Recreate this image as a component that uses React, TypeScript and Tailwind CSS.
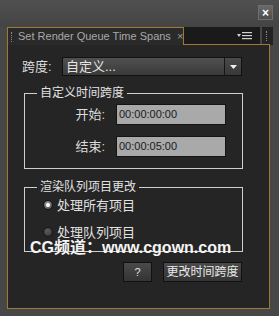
import React from "react";

const gold = "border-[#9c7a35]";

function Radio({ checked }: { checked: boolean }) {
  return (
    <span
      className={
        "flex h-[10px] w-[10px] items-center justify-center rounded-full border border-[#151515] " +
        (checked
          ? "bg-[radial-gradient(circle_at_40%_35%,#9a9a9a,#4a4a4a)]"
          : "bg-[radial-gradient(circle_at_40%_35%,#5c5c5c,#333333)]")
      }
    >
      {checked && <span className="h-[4px] w-[4px] rounded-full bg-white" />}
    </span>
  );
}

export default function App() {
  return (
    <div className="flex h-[316px] w-[279px] flex-col overflow-hidden bg-[#474747] font-['Liberation_Sans','Noto_Sans_CJK_SC',sans-serif]">
      {/* title bar */}
      <div className="flex h-[27px] items-start justify-end bg-gradient-to-b from-[#505050] to-[#444444] pr-[6px] pt-[5px]">
        <div className="flex h-[15px] w-[15px] items-center justify-center border border-[#6e6e6e] bg-gradient-to-b from-[#6a6a6a] to-[#4c4c4c] text-[12px] font-bold leading-none text-white">
          ×
        </div>
      </div>
      {/* tab row */}
      <div className="flex h-[18px]">
        <div className="w-[7px]" />
        <div className={`flex w-[177px] items-center whitespace-nowrap border-l border-r border-t ${gold} bg-[#2a2a2a] pl-[3px]`}>
          <span className="mr-[6px] h-[10px] w-[1px] border-l border-dotted border-[#8a8a8a]" />
          <span className="text-[11px] leading-none text-[#a8a8a8]">Set Render Queue Time Spans</span>
          <span className="ml-[6px] text-[11px] leading-none text-[#9a9a9a]">×</span>
        </div>
        <div className={`flex w-[86px] border-b ${gold}`}>
          <div className="flex flex-1 items-center justify-end bg-[#1a1a1a] pr-[8px]">
            <svg width="15" height="8" viewBox="0 0 15 8">
              <path d="M0 2 L4 2 L2 5 Z" fill="#d0d0d0" />
              <rect x="5" y="0" width="10" height="1.2" fill="#d0d0d0" />
              <rect x="5" y="3" width="10" height="1.2" fill="#d0d0d0" />
              <rect x="5" y="6" width="10" height="1.2" fill="#d0d0d0" />
            </svg>
          </div>
          <div className="w-[2px]" />
          <div className="flex w-[8px] items-center justify-center bg-[#232323]">
            <span className="h-[10px] w-[1px] border-l border-dotted border-[#8a8a8a]" />
          </div>
        </div>
        <div className="flex w-[3px] bg-[#232323]" />
      </div>
      {/* panel */}
      <div className={`relative ml-[7px] flex h-[264px] w-[263px] flex-col border-b border-l border-r ${gold} bg-[#252525]`}>
        {/* span row */}
        <div className="mt-[12px] flex h-[19px] items-center pl-[14px]">
          <span className="w-[40px] text-[13px] leading-none text-[#dcdcdc]">跨度:</span>
          <div className="flex h-[19px] w-[180px] border border-[#111111]">
            <div className="flex flex-1 items-center bg-gradient-to-b from-[#505050] to-[#3a3a3a] pl-[3px] text-[13px] leading-none text-[#e4e4e4]">
              自定义...
            </div>
            <div className="flex w-[17px] items-center justify-center border-l border-[#151515] bg-gradient-to-b from-[#4a4a4a] to-[#383838]">
              <svg width="7" height="4" viewBox="0 0 7 4">
                <path d="M0 0 L7 0 L3.5 4 Z" fill="#f0f0f0" />
              </svg>
            </div>
          </div>
        </div>
        {/* group 1 */}
        <fieldset className="ml-[16px] mt-[10px] w-[219px] border border-[#cfcfcf] pb-[11px]">
          <legend className="ml-[12px] px-[3px] text-[12px] leading-[14px] text-[#e2e2e2]">自定义时间跨度</legend>
          <div className="mt-[4px] flex h-[21px] items-center">
            <span className="w-[80px] text-right text-[13px] leading-none text-[#dcdcdc]">开始:</span>
            <div className="ml-[11px] flex h-[21px] w-[110px] items-center border border-[#141414] bg-[#a9a9a9] pl-[2px] text-[11px] leading-none text-[#1a1a1a]">
              00:00:00:00
            </div>
          </div>
          <div className="mt-[11px] flex h-[21px] items-center">
            <span className="w-[80px] text-right text-[13px] leading-none text-[#dcdcdc]">结束:</span>
            <div className="ml-[11px] flex h-[21px] w-[110px] items-center border border-[#141414] bg-[#a9a9a9] pl-[2px] text-[11px] leading-none text-[#1a1a1a]">
              00:00:05:00
            </div>
          </div>
        </fieldset>
        {/* group 2 */}
        <fieldset className="ml-[16px] mt-[11px] w-[219px] border border-[#cfcfcf] pb-[11px]">
          <legend className="ml-[12px] px-[3px] text-[12px] leading-[14px] text-[#e2e2e2]">渲染队列项目更改</legend>
          <div className="ml-[18px] mt-[3px] flex h-[16px] items-center gap-[4px]">
            <Radio checked />
            <span className="text-[13px] leading-none text-[#e2e2e2]">处理所有项目</span>
          </div>
          <div className="ml-[18px] mt-[11px] flex h-[16px] items-center gap-[4px]">
            <Radio checked={false} />
            <span className="text-[13px] leading-none text-[#e2e2e2]">处理队列项目</span>
          </div>
        </fieldset>
        {/* buttons */}
        <div className="mt-[10px] flex justify-end gap-[11px] pr-[27px]">
          <div className="flex h-[20px] w-[29px] items-center justify-center border border-[#111111] bg-gradient-to-b from-[#4a4a4a] to-[#343434] text-[11px] leading-none text-[#e0e0e0]">
            ?
          </div>
          <div className="flex h-[20px] w-[79px] items-center justify-center whitespace-nowrap border border-[#111111] bg-gradient-to-b from-[#4a4a4a] to-[#343434] text-[12px] leading-none text-[#e8e8e8]">
            更改时间跨度
          </div>
        </div>
        {/* watermark */}
        <div className="absolute left-[22px] top-[195px] whitespace-nowrap text-[16px] font-bold leading-none text-[#f4f4f4]">
          CG频道：www.cgown.com
        </div>
      </div>
    </div>
  );
}
